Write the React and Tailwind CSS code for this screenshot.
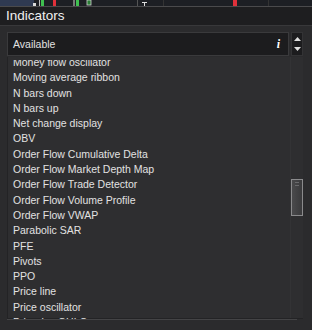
import React from 'react';

const items = [
  'Money flow oscillator',
  'Moving average ribbon',
  'N bars down',
  'N bars up',
  'Net change display',
  'OBV',
  'Order Flow Cumulative Delta',
  'Order Flow Market Depth Map',
  'Order Flow Trade Detector',
  'Order Flow Volume Profile',
  'Order Flow VWAP',
  'Parabolic SAR',
  'PFE',
  'Pivots',
  'PPO',
  'Price line',
  'Price oscillator',
  'Prior day OHLC',
];

// strip of the chart that peeks out above the dialog
function ChartStrip() {
  return (
    <svg width="312" height="6" className="block">
      <rect x="0" y="0" width="312" height="6" fill="#1d1f24" />
      <rect x="0" y="0" width="34" height="6" fill="#2f3a52" />
      <rect x="33" y="3" width="3" height="3" fill="#d8d8d8" />
      <rect x="39" y="0" width="1" height="6" fill="#bbb" />
      <rect x="41" y="0" width="3" height="6" fill="#3fbf4f" />
      <rect x="53" y="0" width="3" height="6" fill="#e0303a" />
      <rect x="73" y="0" width="2" height="6" fill="#777" />
      <rect x="76" y="0" width="3" height="6" fill="#3fbf4f" />
      <rect x="87" y="0" width="4" height="5" fill="#2a7d35" stroke="#cfcfcf" strokeWidth="0.8" />
      <rect x="137" y="0" width="1" height="6" fill="#555" />
      <rect x="142" y="2" width="5" height="1" fill="#ddd" />
      <rect x="144" y="2" width="1" height="4" fill="#ddd" />
      <rect x="163" y="0" width="1" height="6" fill="#333" />
      <rect x="233" y="0" width="4" height="6" fill="#e0303a" />
      <rect x="268" y="0" width="1" height="6" fill="#333" />
    </svg>
  );
}

export default function App() {
  return (
    <div
      className="w-[312px] h-[330px] overflow-hidden bg-[#2b2b2d] text-[#e2e2e2]"
      style={{ fontFamily: '"Liberation Sans", Arial, sans-serif' }}
    >
      <ChartStrip />
      <div className="h-px bg-[#4a4a4c]" />

      {/* title bar */}
      <div className="h-[19px] bg-[#1e1e20] pl-[6px] flex items-center text-[13.5px] leading-none text-[#f0f0f0] border-b border-[#38383a]">
        Indicators
      </div>

      <div className="pl-[7px] pr-[9px] pt-[6px]">
        {/* search / filter row */}
        <div className="flex h-[24px] gap-[2px]">
          <div className="flex-1 flex items-center bg-[#1c1c1e] border border-[#3a3a3c] pl-[5px] pr-[8px] text-[10.5px]">
            <span className="flex-1 pt-px">Available</span>
            <span className="italic font-bold text-[12px] text-white" style={{ fontFamily: '"Liberation Serif", serif' }}>
              i
            </span>
          </div>
          <div className="w-[12px] flex flex-col items-center justify-between py-[4px] bg-[#1c1c1e] border border-[#333335]">
            <svg width="7" height="4" viewBox="0 0 7 4">
              <path d="M0 4 L3.5 0 L7 4 Z" fill="#e0e0e0" />
            </svg>
            <svg width="7" height="4" viewBox="0 0 7 4">
              <path d="M0 0 L3.5 4 L7 0 Z" fill="#e0e0e0" />
            </svg>
          </div>
        </div>

        {/* list */}
        <div className="relative mt-px h-[262px] pt-[3px] bg-[#2e2e30] border-l border-b border-[#232325]">
          <div className="h-[259px] overflow-hidden">
            <div className="mt-[-5px] pl-[5px] text-[10.5px]">
              {items.map((name) => (
                <div key={name} className="h-[15.3px] leading-[15.3px] whitespace-nowrap">
                  {name}
                </div>
              ))}
            </div>
          </div>
          {/* scrollbar */}
          <div className="absolute right-0 top-0 bottom-0 w-[13px] border-l border-[#333335]">
            <div className="absolute left-0 right-0 top-[122px] h-[37px] bg-gradient-to-r from-[#4a4a4c] to-[#3a3a3c] border border-[#8a8a8c]">
              <div className="mx-[3px] mt-[2px] h-px bg-[#6a6a6c]" />
              <div className="mx-[3px] mt-[2px] h-px bg-[#6a6a6c]" />
            </div>
          </div>
        </div>
        <div className="h-px bg-[#444446] mr-[6px]" />
      </div>
    </div>
  );
}
